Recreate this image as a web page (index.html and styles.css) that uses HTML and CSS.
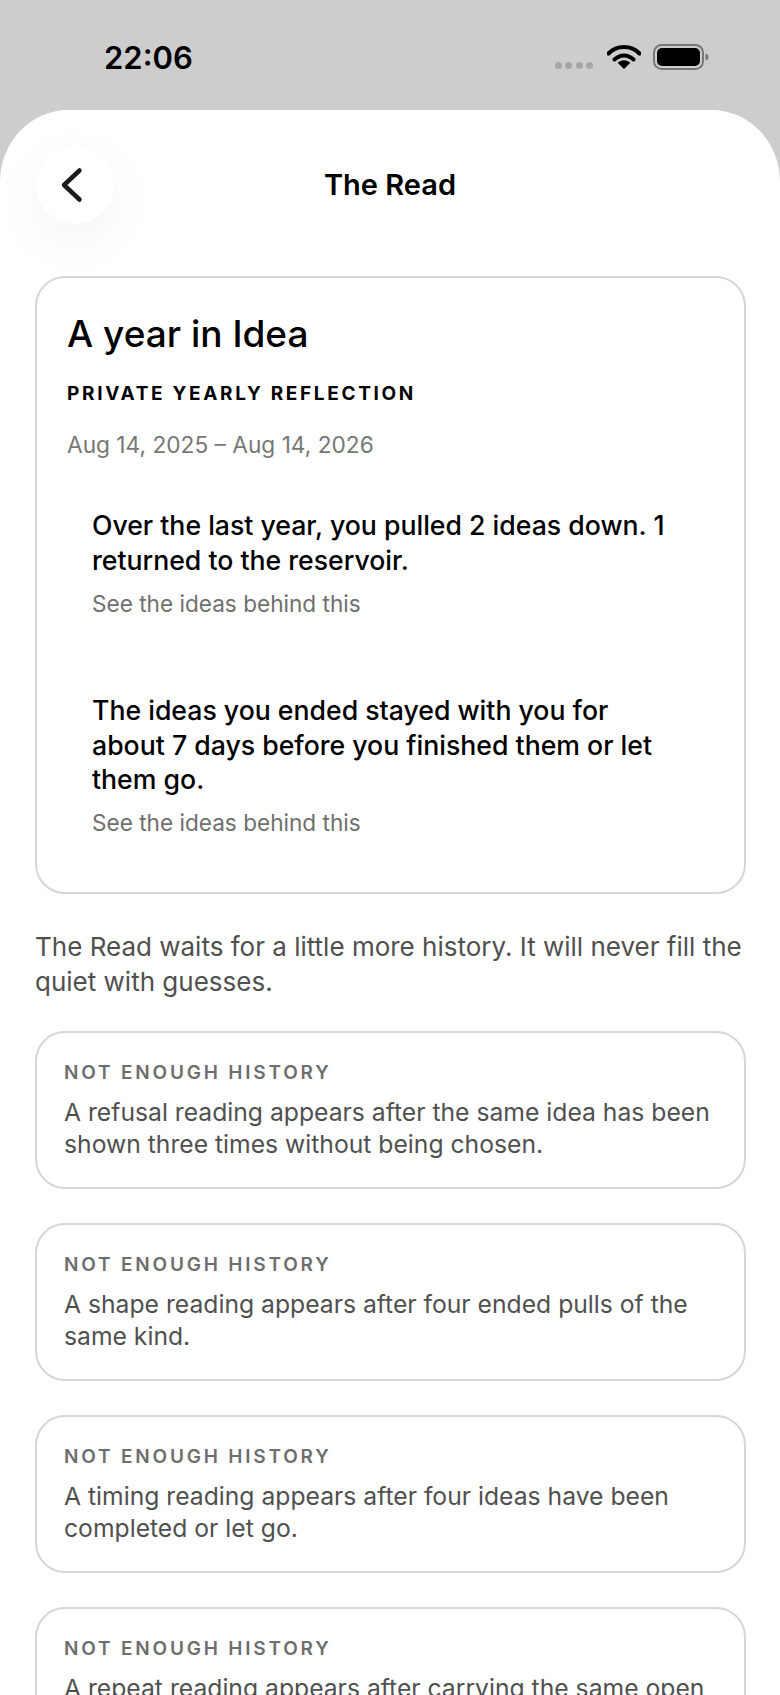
FILE: index.html
```html
<!DOCTYPE html>
<html lang="en">
<head>
  <meta charset="UTF-8" />
  <title>The Read</title>
  <link rel="stylesheet" href="styles.css">
</head>
<body>
  <div class="status-bar">
    <span class="time">22:06</span>
    <div class="status-icons">
      <div class="signal"><i></i><i></i><i></i><i></i></div>
      <svg class="wifi" width="34" height="26" viewBox="0 0 34 26">
        <path d="M1.5 9.5C5.6 5.3 11 3 17 3s11.400 2.300 15.500 6.500" fill="none" stroke="#000" stroke-width="4.200" stroke-linecap="round"/>
        <path d="M7.500 15.500C10 13 13.300 11.400 17 11.400s7 1.600 9.500 4.100" fill="none" stroke="#000" stroke-width="4" stroke-linecap="round"/>
        <path d="M17 25l-6.300-6.300c1.600-1.500 3.800-2.400 6.300-2.400s4.700.9 6.300 2.400z" fill="#000"/>
      </svg>
      <svg class="battery" width="56" height="26" viewBox="0 0 56 26">
        <rect x="1" y="1" width="49" height="24" rx="7.500" fill="none" stroke="#777" stroke-width="2"/>
        <rect x="4" y="4" width="43" height="18" rx="5" fill="#000"/>
        <path d="M52.500 9.500c2 .5 3 1.800 3 3.500s-1 3-3 3.500z" fill="#777"/>
      </svg>
    </div>
  </div>

  <div class="sheet">
    <div class="nav">
      <button class="back-btn" type="button" aria-label="Back">
        <svg width="26" height="36" viewBox="0 0 26 36">
          <path d="M20.500 3.500L5 18l15.500 14.500" fill="none" stroke="#1c1c1c" stroke-width="4.500" stroke-linecap="round" stroke-linejoin="round"/>
        </svg>
      </button>
      <h1 class="nav-title">The Read</h1>
    </div>

    <div class="content">
      <section class="year-card">
        <h2>A year in Idea</h2>
        <p class="eyebrow">PRIVATE YEARLY REFLECTION</p>
        <p class="dates">Aug 14, 2025 – Aug 14, 2026</p>
        <div class="finding">
          <p>Over the last year, you pulled 2 ideas down. 1 returned to the reservoir.</p>
          <a class="behind">See the ideas behind this</a>
        </div>
        <div class="finding">
          <p>The ideas you ended stayed with you for about 7 days before you finished them or let them go.</p>
          <a class="behind">See the ideas behind this</a>
        </div>
      </section>

      <p class="waiting">The Read waits for a little more history. It will never fill the quiet with guesses.</p>

      <section class="note-card">
        <h3>NOT ENOUGH HISTORY</h3>
        <p>A refusal reading appears after the same idea has been shown three times without being chosen.</p>
      </section>
      <section class="note-card">
        <h3>NOT ENOUGH HISTORY</h3>
        <p>A shape reading appears after four ended pulls of the same kind.</p>
      </section>
      <section class="note-card">
        <h3>NOT ENOUGH HISTORY</h3>
        <p>A timing reading appears after four ideas have been completed or let go.</p>
      </section>
      <section class="note-card">
        <h3>NOT ENOUGH HISTORY</h3>
        <p>A repeat reading appears after carrying the same open idea for a while.</p>
      </section>
    </div>
  </div>
</body>
</html>
```

FILE: styles.css
```css
* {
  box-sizing: border-box;
}
html,
body {
  height: 1695px;
}
body {
  margin: 0;
  background-color: #cdcdcd;
  font-family: Inter, "Noto Sans", sans-serif;
  color: #000;
  overflow: hidden;
}
p,
h1,
h2,
h3 {
  margin: 0;
  font-weight: 500;
}
.status-bar {
  height: 110px;
  padding: 40px 71px 0 104px;
  display: flex;
  justify-content: space-between;
  align-items: flex-start;
}
.time {
  font-size: 31px;
  line-height: 36px;
  font-weight: 600;
}
.status-icons {
  display: flex;
  align-items: flex-start;
  padding-top: 4px;
}
.signal {
  display: flex;
  gap: 3.500px;
  margin: 18px 14px 0 0;
}
.signal i {
  width: 7px;
  height: 7px;
  border-radius: 50%;
  background-color: #a6a6a6;
}
.wifi {
  margin-right: 12px;
}
.sheet {
  height: 1585px;
  background-color: #fff;
  border-radius: 68px 68px 0 0 / 72px 72px 0 0;
  overflow: hidden;
}
.nav {
  display: flex;
  align-items: center;
  justify-content: center;
  position: relative;
  height: 166px;
}
.back-btn {
  position: absolute;
  left: 36px;
  top: 36px;
  width: 78px;
  height: 78px;
  padding: 0;
  border: none;
  border-radius: 50%;
  background-color: #fff;
  display: flex;
  align-items: center;
  justify-content: center;
  box-shadow: 0 16px 56px rgba(0, 0, 0, 0.05);
}
.back-btn svg {
  margin-right: 6px;
}
.nav-title {
  font-size: 29px;
  line-height: 34px;
  font-weight: 600;
  margin-top: -16px;
}
.content {
  padding: 0 34px 0 35px;
  display: flex;
  flex-direction: column;
}
.year-card {
  border: 2px solid #d6d6d6;
  border-radius: 30px;
  height: 618px;
  padding: 33px 30px 0;
}
.year-card h2 {
  font-size: 37px;
  line-height: 46px;
  font-weight: 450;
}
.eyebrow {
  margin-top: 25px;
  font-size: 19px;
  line-height: 24px;
  font-weight: 700;
  letter-spacing: 2.670px;
}
.dates {
  margin-top: 25px;
  font-size: 22.700px;
  line-height: 28px;
  color: #777;
  font-weight: 400;
}
.finding {
  padding: 0 39px 0 25px;
  margin-top: 49px;
  margin-bottom: 75.500px;
}
.finding + .finding {
  margin-top: 0;
}
.finding p {
  font-size: 26.650px;
  line-height: 34.500px;
  font-weight: 450;
}
.behind {
  display: block;
  margin-top: 12.500px;
  font-size: 22.600px;
  line-height: 28px;
  color: #6f6f6f;
}
.waiting {
  margin-top: 36px;
  font-size: 26px;
  line-height: 34.500px;
  font-weight: 400;
  color: #505050;
}
.note-card {
  margin-top: 34px;
  border: 2px solid #d6d6d6;
  border-radius: 30px;
  height: 158px;
  padding: 28px 26px 0 27px;
}
.waiting + .note-card {
  margin-top: 32px;
}
.note-card h3 {
  font-size: 19px;
  line-height: 24px;
  font-weight: 600;
  letter-spacing: 2.800px;
  color: #6e6e6e;
}
.note-card p {
  margin-top: 11px;
  font-size: 24.700px;
  line-height: 32px;
  font-weight: 400;
  color: #505050;
}
```
